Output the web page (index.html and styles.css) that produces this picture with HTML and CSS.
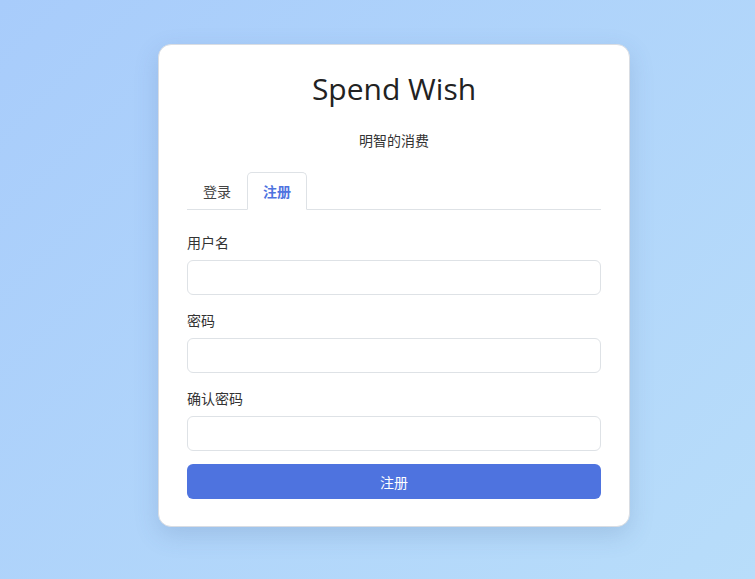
FILE: index.html
```html
<!DOCTYPE html>
<html lang="zh-CN">
<head>
<meta charset="utf-8">
<title>Spend Wish</title>
<link rel="stylesheet" href="styles.css">
</head>
<body>
<div class="page">
  <div class="card">
    <h1 class="title">Spend Wish</h1>
    <p class="subtitle">明智的消费</p>
    <div class="tabs">
      <div class="tab">登录</div>
      <div class="tab active">注册</div>
    </div>
    <form class="form">
      <div class="group">
        <label class="label">用户名</label>
        <input class="input" type="text">
      </div>
      <div class="group">
        <label class="label">密码</label>
        <input class="input" type="password">
      </div>
      <div class="group">
        <label class="label">确认密码</label>
        <input class="input" type="password">
      </div>
      <button class="btn" type="button">注册</button>
    </form>
  </div>
</div>
</body>
</html>
```
FILE: styles.css
```css
html, body {
  margin: 0;
  padding: 0;
  height: 100%;
}
body {
  background: linear-gradient(135deg, #a8ccfb 0%, #b8ddfa 100%);
  font-family: "Noto Sans", "Noto Sans CJK SC", sans-serif;
  color: #333;
  font-size: 14px;
}
.page {
  padding: 44px 0 0 158px;
}
.card {
  box-sizing: border-box;
  width: 472px;
  background: #fff;
  border: 1px solid #d9dde3;
  border-radius: 13px;
  padding: 24px 28px 27px;
  box-shadow: 0 8px 24px rgba(60, 90, 140, 0.18);
}
.title {
  margin: 0;
  text-align: center;
  font-family: "Open Sans", "Noto Sans", sans-serif;
  font-weight: 400;
  font-size: 30px;
  line-height: 40px;
  color: #222;
}
.subtitle {
  margin: 21px 0 0;
  text-align: center;
  font-family: "Noto Sans CJK SC", sans-serif;
  font-size: 14px;
  line-height: 20px;
  color: #333;
}
.tabs {
  margin-top: 22px;
  display: flex;
  border-bottom: 1px solid #dee2e6;
}
.tab {
  box-sizing: border-box;
  height: 38px;
  margin-bottom: -1px;
  padding: 0 15px;
  border: 1px solid transparent;
  border-top-left-radius: 5px;
  border-top-right-radius: 5px;
  display: flex;
  align-items: center;
  font-family: "Noto Sans CJK SC", sans-serif;
  font-size: 14px;
  color: #444;
}
.tab.active {
  border-color: #dee2e6 #dee2e6 #fff;
  color: #4e73df;
  font-weight: 600;
}
.form {
  margin-top: 22px;
}
.group {
  margin-bottom: 15px;
}
.label {
  display: block;
  font-family: "Noto Sans CJK SC", sans-serif;
  font-size: 14px;
  line-height: 20px;
  margin-bottom: 8px;
  color: #333;
}
.input {
  display: block;
  box-sizing: border-box;
  width: 100%;
  height: 35px;
  border: 1px solid #dee2e6;
  border-radius: 6px;
  background: #fff;
  padding: 0 12px;
  font-size: 14px;
  outline: none;
}
.btn {
  display: block;
  box-sizing: border-box;
  width: 100%;
  height: 35px;
  margin-top: -2px;
  border: none;
  border-radius: 6px;
  background: #4e73df;
  color: #fff;
  font-family: "Noto Sans CJK SC", sans-serif;
  font-size: 14px;
  cursor: pointer;
}
```
